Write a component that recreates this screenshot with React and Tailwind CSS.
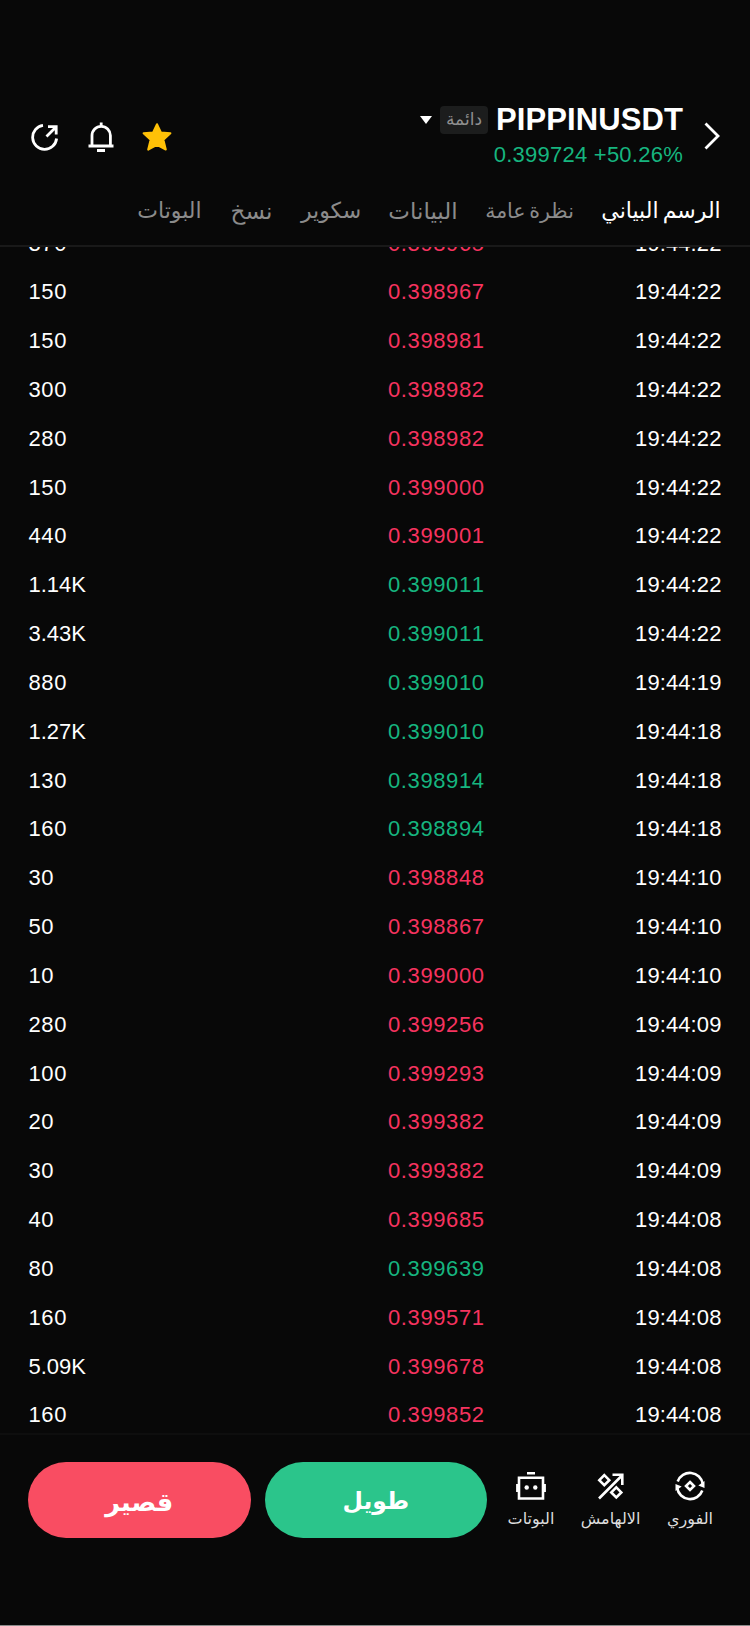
const trades = [
  { qty: '370', price: '0.398965', time: '19:44:22', side: 'sell' },
  { qty: '150', price: '0.398967', time: '19:44:22', side: 'sell' },
  { qty: '150', price: '0.398981', time: '19:44:22', side: 'sell' },
  { qty: '300', price: '0.398982', time: '19:44:22', side: 'sell' },
  { qty: '280', price: '0.398982', time: '19:44:22', side: 'sell' },
  { qty: '150', price: '0.399000', time: '19:44:22', side: 'sell' },
  { qty: '440', price: '0.399001', time: '19:44:22', side: 'sell' },
  { qty: '1.14K', price: '0.399011', time: '19:44:22', side: 'buy' },
  { qty: '3.43K', price: '0.399011', time: '19:44:22', side: 'buy' },
  { qty: '880', price: '0.399010', time: '19:44:19', side: 'buy' },
  { qty: '1.27K', price: '0.399010', time: '19:44:18', side: 'buy' },
  { qty: '130', price: '0.398914', time: '19:44:18', side: 'buy' },
  { qty: '160', price: '0.398894', time: '19:44:18', side: 'buy' },
  { qty: '30', price: '0.398848', time: '19:44:10', side: 'sell' },
  { qty: '50', price: '0.398867', time: '19:44:10', side: 'sell' },
  { qty: '10', price: '0.399000', time: '19:44:10', side: 'sell' },
  { qty: '280', price: '0.399256', time: '19:44:09', side: 'sell' },
  { qty: '100', price: '0.399293', time: '19:44:09', side: 'sell' },
  { qty: '20', price: '0.399382', time: '19:44:09', side: 'sell' },
  { qty: '30', price: '0.399382', time: '19:44:09', side: 'sell' },
  { qty: '40', price: '0.399685', time: '19:44:08', side: 'sell' },
  { qty: '80', price: '0.399639', time: '19:44:08', side: 'buy' },
  { qty: '160', price: '0.399571', time: '19:44:08', side: 'sell' },
  { qty: '5.09K', price: '0.399678', time: '19:44:08', side: 'sell' },
  { qty: '160', price: '0.399852', time: '19:44:08', side: 'sell' },
];

const tabs = [
  { label: 'الرسم البياني', style: 'w-[120px] text-[22px] text-white [word-spacing:-2px]' },
  { label: 'نظرة عامة', style: 'w-[87px] text-[20.5px] [word-spacing:-2px]' },
  { label: 'البيانات', style: 'w-[70px] text-[23px]' },
  { label: 'سكوير', style: 'w-[58px] text-[22px]' },
  { label: 'نسخ', style: 'w-[45px] text-[23px]' },
  { label: 'البوتات', style: 'w-[63px] text-[22px]' },
];

const ShareIcon = () => (
  <svg width="28" height="30" viewBox="0 0 28 30" fill="none" stroke="currentColor" strokeWidth="2.8">
    <path d="M12 3.4A12 12 0 1 0 25.6 16.5" />
    <path d="M15.5 14.5L25 5M17 4.6H25.2V12.5" />
  </svg>
);

const BellIcon = () => (
  <svg width="26" height="30" viewBox="0 0 26 30" fill="none" stroke="currentColor" strokeWidth="2.8">
    <path d="M4 24V13.5a9.2 9.2 0 0 1 18.4 0V24" />
    <path d="M0.5 24H25.5M13.2 0.5V4M9 28.5h8" />
  </svg>
);

const StarIcon = () => (
  <svg width="30" height="30" viewBox="0 0 30 30" fill="#ffc107" stroke="#ffc107" strokeWidth="2" strokeLinejoin="round">
    <path d="M15 2.2L18.9 10.5L28.4 11.3L21.4 17.8L23.8 27.6L15 22.8L6.2 27.6L8.6 17.8L1.6 11.3L11.1 10.5Z" />
  </svg>
);

const SpotIcon = () => (
  <svg width="30" height="30" viewBox="0 0 30 30" fill="none" stroke="currentColor" strokeWidth="2.6">
    <path d="M2.7 10.5A13 13 0 0 1 27.8 13M27.3 19.5A13 13 0 0 1 2.2 17" />
    <path d="M15 11L19 15L15 19L11 15Z" />
    <path d="M29.5 10V17L23.3 14.5ZM0.5 20V13L6.7 15.5Z" fill="currentColor" stroke="none" />
  </svg>
);

const MarginIcon = () => (
  <svg width="30" height="30" viewBox="0 0 30 30" fill="none" stroke="currentColor" strokeWidth="2.6">
    <path d="M3 27.5L26 4.5M16.5 3.8H26.3V14" />
    <path d="M8.3 4.2L13.3 9.2L8.3 14.2L3.3 9.2ZM20.3 16.4L25.3 21.4L20.3 26.4L15.3 21.4Z" />
  </svg>
);

const BotIcon = () => (
  <svg width="30" height="30" viewBox="0 0 30 30" fill="none" stroke="currentColor" strokeWidth="2.6">
    <path d="M3 6.7H27V27.5H3ZM11 2.2h8M1.4 13v8M28.6 13v8" />
    <circle cx="10.7" cy="16.5" r="2.2" fill="currentColor" stroke="none" />
    <circle cx="19.3" cy="16.5" r="2.2" fill="currentColor" stroke="none" />
  </svg>
);

const shortcuts = [
  { label: 'الفوري', Icon: SpotIcon, width: 'w-[46px]' },
  { label: 'الالهامش', Icon: MarginIcon, width: 'w-[60px]' },
  { label: 'البوتات', Icon: BotIcon, width: 'w-[46px]' },
];

function Header() {
  return (
    <header dir="rtl" className="h-[247px] shrink-0 border-b-2 border-[#191919] pt-[101px]">
      <div className="flex h-[74px] items-start justify-between pr-[30px] pl-[31px]">
        <div className="flex items-start">
          <svg width="16" height="28" viewBox="0 0 16 28" className="mt-[21px]" fill="none" stroke="white" strokeWidth="2.8">
            <path d="M1.5 1.5L14 14L1.5 26.5" />
          </svg>
          <div className="mr-[21px] flex flex-col items-start">
            <div className="flex h-[38px] items-center">
              <h1 dir="ltr" className="text-[31px] leading-[38px] font-bold tracking-[0.1px]">PIPPINUSDT</h1>
              <span className="mr-2 flex h-7 w-12 items-center justify-center rounded bg-[#1c1d1d] text-[17px] text-[#8f8f8f]">دائمة</span>
              <svg width="12" height="8" viewBox="0 0 12 8" className="mr-2" fill="white">
                <path d="M0 0H12L6 8Z" />
              </svg>
            </div>
            <div dir="ltr" className="text-[22px] leading-8 tracking-[0.25px] text-[#16b57f]">0.399724 +50.26%</div>
          </div>
        </div>
        <div className="mt-[21px] flex items-center">
          <StarIcon />
          <div className="mr-7"><BellIcon /></div>
          <div className="mr-[29px]"><ShareIcon /></div>
        </div>
      </div>
      <nav className="flex items-center gap-7 pt-[18px] pr-[29px] leading-9 whitespace-nowrap text-[#8b8b8b]">
        {tabs.map(({ label, style }) => (
          <span key={label} className={`flex h-9 shrink-0 items-center justify-center ${style}`}>{label}</span>
        ))}
      </nav>
    </header>
  );
}

function TradeRow({ qty, price, time, side }) {
  return (
    <div className="flex h-[48.84px] shrink-0 items-center pr-[28.5px] pl-[28.5px] text-[22px] [font-kerning:none]">
      <span className={`w-[359.5px] ${qty.endsWith('K') ? 'tracking-normal' : 'tracking-[0.6px]'}`}>{qty}</span>
      <span className={`tracking-[0.6px] ${side === 'buy' ? 'text-[#16b57f]' : 'text-[#f6335f]'}`}>{price}</span>
      <span className="ml-auto tracking-[0.1px]">{time}</span>
    </div>
  );
}

function BottomBar() {
  return (
    <footer className="flex h-[192px] shrink-0 items-start border-t-2 border-[#0e0e0e] pt-[27px] pl-[28px]">
      <div className="flex gap-3.5 font-bold">
        <button className="h-[76px] w-[222.5px] rounded-full bg-[#f94d62] pt-1 text-[25.5px]">قصير</button>
        <button className="h-[76px] w-[222.5px] rounded-full bg-[#2bc58b] pt-1 text-[23.5px]">طويل</button>
      </div>
      <div dir="rtl" className="mr-[37px] ml-auto flex gap-[26.5px] pt-[9px]">
        {shortcuts.map(({ label, Icon, width }) => (
          <div key={label} className={`flex flex-col items-center ${width}`}>
            <Icon />
            <span className="mt-1.5 text-[16px] leading-6 whitespace-nowrap text-[#dedede]">{label}</span>
          </div>
        ))}
      </div>
    </footer>
  );
}

export default function App() {
  return (
    <div className="flex h-[1626px] w-[750px] flex-col overflow-hidden border-b border-[#8a8a8a] bg-[#080808] font-['Liberation_Sans','DejaVu_Sans',sans-serif] text-white">
      <Header />
      <main className="flex min-h-0 flex-1 flex-col overflow-hidden">
        <div className="-mt-[28.4px]">
          {trades.map((trade, i) => (
            <TradeRow key={i} {...trade} />
          ))}
        </div>
      </main>
      <BottomBar />
    </div>
  );
}
